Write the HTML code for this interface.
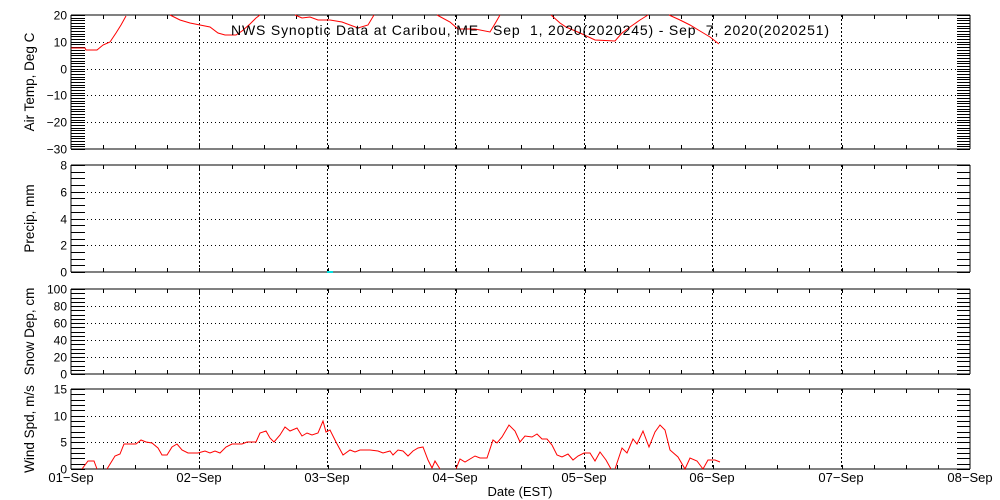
<!DOCTYPE html>
<html><head><style>
html,body{margin:0;padding:0;background:#fff;}
svg{display:block;font-family:"Liberation Sans",sans-serif;}
text{white-space:pre;}
</style></head><body>
<svg id="s" width="1000" height="500" xmlns="http://www.w3.org/2000/svg">
<rect width="1000" height="500" fill="#fff"/>
<g id="g" stroke="#000" stroke-width="1" fill="none" shape-rendering="crispEdges"></g>
<g id="t" font-size="12" fill="#000"></g>
<rect x="327" y="271" width="6" height="2" fill="#00e0e0"/>
<polyline fill="none" stroke="#f00" stroke-width="1" points="71,48 85,48 86,50 97,50 103,45 110,42 116,33 121,25 126,16"/>
<polyline fill="none" stroke="#f00" stroke-width="1" points="170,15 180,20 190,23 200,25 210,27 218,33 225,35 236,35 242,31 250,24 256,18 260,15"/>
<polyline fill="none" stroke="#f00" stroke-width="1" points="295,15 302,18 310,17 318,20 330,20 342,22 358,28 368,25 374,15"/>
<polyline fill="none" stroke="#f00" stroke-width="1" points="437,15 450,22 458,29 475,29 490,32 496,22 500,15"/>
<polyline fill="none" stroke="#f00" stroke-width="1" points="551,15 560,23 566,27 580,33 595,40 615,41 622,33 630,27 640,20 648,15"/>
<polyline fill="none" stroke="#f00" stroke-width="1" points="669,15 680,20 690,25 700,31 710,37 719,44"/>
<polyline fill="none" stroke="#f00" stroke-width="1" points="82,469 88,461 94,461 97,469"/>
<polyline fill="none" stroke="#f00" stroke-width="1" points="107,469 115,456 120,454 124,444 130,444 136,444 141,440 146,442 152,443 158,448 162,455 167,455 172,447 177,444 182,450 188,453 198,453 205,451 210,453 215,451 220,453 226,447 232,444 242,444 247,442 256,442 260,433 266,431 270,438 274,442 280,435 285,427 290,431 297,428 302,436 307,433 312,435 318,433 323,421 326,432 330,430 336,442 343,455 350,450 355,452 360,450 370,450 378,451 383,453 390,451 393,455 398,450 403,451 408,456 413,451 418,448 423,447 428,460 432,468 435,461 440,469"/>
<polyline fill="none" stroke="#f00" stroke-width="1" points="456,469 460,459 465,462 475,456 480,458 487,458 493,440 497,443 502,437 509,425 515,431 520,442 525,436 532,437 537,434 542,439 547,439 552,445 557,455 562,457 568,454 573,460 578,456 584,453 590,453 595,461 600,452 606,460 611,469"/>
<polyline fill="none" stroke="#f00" stroke-width="1" points="615,469 622,448 627,453 633,439 637,444 643,431 649,447 655,432 660,425 665,430 670,450 678,457 685,469 690,458 697,461 703,469 708,460 715,460 720,462"/>
<text x="231" y="35" font-size="14" fill="#000" textLength="598" lengthAdjust="spacing">NWS Synoptic Data at Caribou, ME   Sep  1, 2020(2020245) - Sep  7, 2020(2020251)</text>
<text x="520" y="496" font-size="13" text-anchor="middle" fill="#000">Date (EST)</text>
</svg>
<script>
var g=document.getElementById('g'),t=document.getElementById('t'),NS="http://www.w3.org/2000/svg";
function L(x1,y1,x2,y2,d){var e=document.createElementNS(NS,'line');e.setAttribute('x1',x1);e.setAttribute('y1',y1);e.setAttribute('x2',x2);e.setAttribute('y2',y2);if(d)e.setAttribute('stroke-dasharray',d);g.appendChild(e);}
function T(x,y,s,a,r,fs){var e=document.createElementNS(NS,'text');e.setAttribute('x',x);e.setAttribute('y',y);if(a)e.setAttribute('text-anchor',a);if(fs)e.setAttribute('font-size',fs);if(r)e.setAttribute('transform','rotate(-90 '+x+' '+y+')');e.textContent=s;t.appendChild(e);}
var X0=71,X1=970,days=[71,199,327,455,584,712,841,970];
var P=[{top:15,bot:149,min:-30,max:20,minor:1,major:10,lab:"Air Temp, Deg C"},
{top:165,bot:272,min:0,max:8,minor:0.5,major:2,lab:"Precip, mm"},
{top:289,bot:374,min:0,max:100,minor:5,major:20,lab:"Snow Dep, cm"},
{top:389,bot:469,min:0,max:15,minor:1,major:5,lab:"Wind Spd, m/s"}];
P.forEach(function(p){
 L(X0,p.top,X1,p.top);L(X0,p.bot,X1,p.bot);L(X0,p.top,X0,p.bot);L(X1,p.top,X1,p.bot);
 var sc=(p.bot-p.top)/(p.max-p.min);
 for(var v=p.min;v<=p.max+1e-9;v+=p.minor){var y=Math.round(p.bot-(v-p.min)*sc)+0.5;
  L(X0,y,X0+14,y);L(X1-13,y,X1,y);}
 for(var v=p.min;v<=p.max+1e-9;v+=p.major){var y=Math.round(p.bot-(v-p.min)*sc)+0.5;
  if(v>p.min&&v<p.max)L(X0,y,X1,y,"1,3");
  T(67,y+4,(v<0?"\u2212":"")+Math.abs(v),"end");}
 for(var i=1;i<7;i++)L(days[i]+0.5,p.top,days[i]+0.5,p.bot,"2,2");
 for(var i=1;i<28;i++){var x=Math.round(X0+i*(X1-X0)/28)+0.5;L(x,p.top,x,p.top+4);L(x,p.bot-4,x,p.bot);}
 T(34,(p.top+p.bot)/2,p.lab,"middle",true,13.5);
});
["01-Sep","02-Sep","03-Sep","04-Sep","05-Sep","06-Sep","07-Sep","08-Sep"].forEach(function(s,i){T(days[i],482,s.replace("-","\u2212"),"middle",false,13);});
</script>
</body></html>
